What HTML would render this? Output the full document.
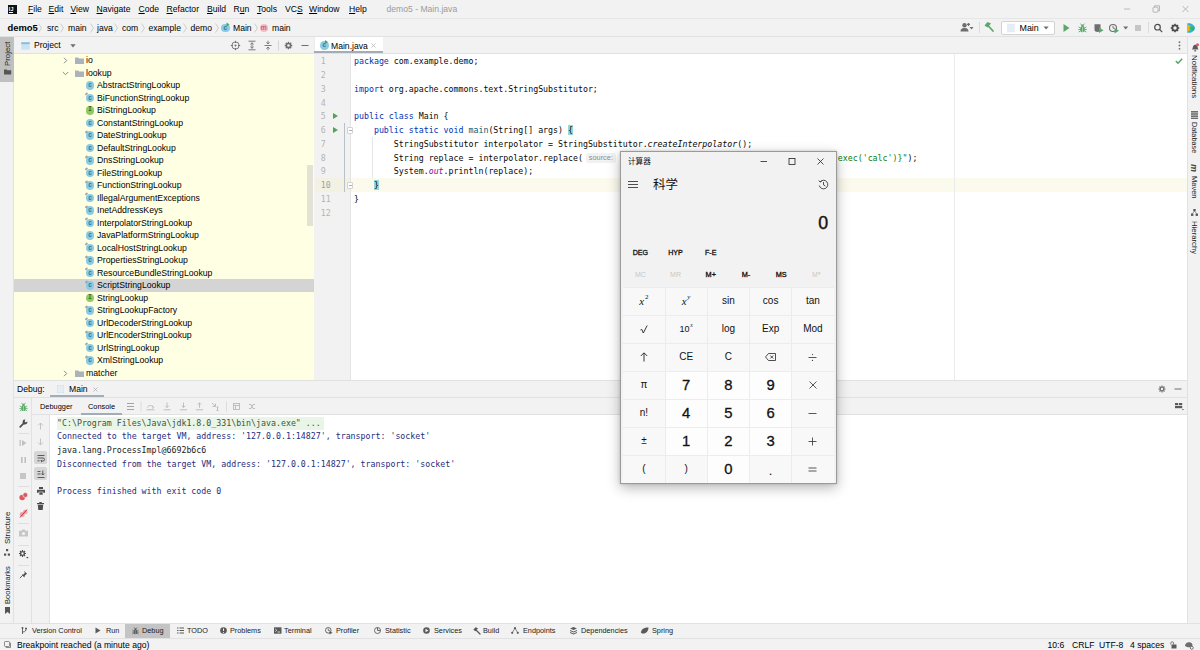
<!DOCTYPE html>
<html><head><meta charset="utf-8"><title>demo5 - Main.java</title>
<style>
*{box-sizing:border-box;margin:0;padding:0}
html,body{width:1200px;height:650px;overflow:hidden;background:#f2f2f2;font-family:"Liberation Sans","Noto Sans CJK SC",sans-serif;font-size:8.6px;color:#000}
.a{position:absolute}
.t{position:absolute;white-space:nowrap;line-height:12px;height:12px}
.mono{font-family:"DejaVu Sans Mono","Liberation Mono",monospace;font-size:8.27px}
svg{position:absolute;overflow:visible}
/* title */
#title{left:0;top:0;width:1200px;height:18px;background:#f2f2f2}
#title .t{top:3px;font-size:8.6px}
#title u{text-decoration:underline;text-underline-offset:1px}
#nav{left:0;top:18px;width:1200px;height:19px;background:#f2f2f2;border-top:1px solid #e6e6e6;border-bottom:1px solid #e1e1e1}
#nav .t{top:3px}
#nav .sep{color:#9a9a9a;font-size:9px;top:2.5px}
/* strips */
#lstrip{left:0;top:37px;width:13.5px;height:586px;background:#f2f2f2;border-right:1px solid #e1e1e1}
#rstrip{left:1187px;top:37px;width:13px;height:586px;background:#f2f2f2;border-left:1px solid #e1e1e1}
.vt{position:absolute;white-space:nowrap;font-size:7.3px;line-height:10px;height:10px;transform-origin:0 0}
/* project */
#phead{left:14px;top:37px;width:299.5px;height:16.5px;background:#f2f2f2;border-bottom:1px solid #e1e1e1}
#tree{left:14px;top:53.5px;width:299.5px;height:326.5px;background:#ffffe4;overflow:hidden}
#tree .r{position:absolute;left:0;width:299.5px;height:12.5px;line-height:12.5px;white-space:nowrap;font-size:8.7px}
#tree .r span{position:absolute;left:83px;top:0}
#tree .r.fd span{left:72px}
#tree .sel{background:#d4d4d4}
.ci{position:absolute;left:71.75px;top:2px;width:8.5px;height:8.5px;border-radius:50%;background:#89cbe3;color:#2b7a9e;font-size:6.5px;line-height:8px;text-align:center;font-weight:bold;font-style:normal}
.ci.i{background:#93c866;color:#3e6b1b;font-family:"Liberation Mono",monospace}
.pin:before{content:"";position:absolute;left:-.5px;top:-.5px;width:2.5px;height:2px;background:#9aa7ae;border-radius:1px 1px 1px 0;transform:rotate(-40deg)}
/* editor */
#tabs{left:313.5px;top:37px;width:873.5px;height:16.5px;background:#f2f2f2;border-bottom:1px solid #e1e1e1;border-left:1px solid #ececec}
#ed{left:313.5px;top:53.5px;width:873.5px;height:326.5px;background:#fff;overflow:hidden;border-left:1px solid #f2f2f2}
#gut{left:0;top:0;width:36px;height:327px;background:#f2f2f2;border-right:1px solid #e4e4e4}
.ln{position:absolute;left:6.2px;color:#a8a8a8;line-height:13.75px;height:13.75px}
.cl{position:absolute;left:39.5px;line-height:13.75px;height:13.75px;white-space:pre;color:#080808}
.k{color:#0033b3}.s{color:#067d17}.m{color:#00627a}.f{color:#871094;font-style:italic}.it{font-style:italic}
.hint{display:inline-block;width:29.9px;margin:0 3px;height:10px;line-height:10px;vertical-align:1px;text-align:center;font-family:"Liberation Sans",sans-serif;font-size:7.4px;color:#8c8c8c;background:#f2f2f2;border-radius:2px}
/* debug */
#dbg{left:14px;top:380px;width:1173px;height:242.5px;background:#fff;border-top:1px solid #e1e1e1}
#dh1{left:0;top:0;width:1173px;height:17px;background:#f2f2f2;border-bottom:1px solid #e1e1e1}
#dh2{left:17.5px;top:17px;width:1155.5px;height:17px;background:#f2f2f2;border-bottom:1px solid #e1e1e1}
#dc1{left:0;top:17px;width:17.5px;height:225px;background:#f2f2f2;border-right:1px solid #e1e1e1}
#dc2{left:17.5px;top:34px;width:18.5px;height:208px;background:#f2f2f2;border-right:1px solid #e1e1e1}
.co{position:absolute;left:43px;line-height:13.75px;height:13.75px;white-space:pre;color:#262d7d}
/* bottom */
#bbar{left:0;top:622.5px;width:1200px;height:15px;background:#f2f2f2;border-top:1px solid #e1e1e1}
#bbar .t{font-size:7.3px;top:1.5px;color:#1a1a1a}
#stat{left:0;top:637.5px;width:1200px;height:12.5px;background:#f2f2f2;border-top:1px solid #e1e1e1}
#stat .t{top:0.5px}
/* calc */
#calc{left:620px;top:150.5px;width:216.6px;height:333.6px;background:#f2f2f2;border:1px solid #9a9a9a;box-shadow:0 4px 12px rgba(0,0,0,.28),0 0 3px rgba(0,0,0,.15);font-family:"Liberation Sans","Noto Sans CJK SC",sans-serif}
.cb{position:absolute;background:#f8f8f8;display:flex;align-items:center;justify-content:center;line-height:1;font-size:10px;color:#111;white-space:nowrap}
.cb.n{background:#fdfdfd;font-weight:normal;font-size:14.8px;-webkit-text-stroke:.3px #111}
.cb.o{font-size:14px;color:#333}
.sx{font-family:"Liberation Serif",serif;font-style:italic;font-size:10.8px;line-height:1}
.sup{position:relative;top:-3.2px;font-family:"Liberation Serif",serif;font-size:7px;line-height:1;margin-left:.8px}
.sb{font-weight:normal;-webkit-text-stroke:.3px #111}
</style></head><body>
<!--TITLE-->
<div id="title" class="a">
 <div class="a" style="left:7.5px;top:4.5px;width:9.5px;height:9.5px;background:#111;"></div>
 <div class="t" style="left:8.8px;top:5.6px;color:#fff;font-size:5.4px;font-weight:bold;line-height:6px;height:6px;letter-spacing:.3px">IJ</div>
 <div class="a" style="left:8.8px;top:11.8px;width:3.8px;height:.9px;background:#fff"></div>
 <div class="t" style="left:28px"><u>F</u>ile</div>
 <div class="t" style="left:48.5px"><u>E</u>dit</div>
 <div class="t" style="left:70.5px"><u>V</u>iew</div>
 <div class="t" style="left:96.5px"><u>N</u>avigate</div>
 <div class="t" style="left:138.5px"><u>C</u>ode</div>
 <div class="t" style="left:166.5px"><u>R</u>efactor</div>
 <div class="t" style="left:207px"><u>B</u>uild</div>
 <div class="t" style="left:233.5px">R<u>u</u>n</div>
 <div class="t" style="left:257px"><u>T</u>ools</div>
 <div class="t" style="left:285px">VC<u>S</u></div>
 <div class="t" style="left:309px"><u>W</u>indow</div>
 <div class="t" style="left:349px"><u>H</u>elp</div>
 <div class="t" style="left:386.5px;color:#9b9b9b">demo5 - Main.java</div>
 <svg style="left:1122px;top:4px" width="70" height="10" viewBox="0 0 70 10" fill="none" stroke="#a9a9a9" stroke-width="0.8">
  <path d="M2 5h6"/>
  <rect x="31" y="3.2" width="5" height="5" rx="0.8"/><path d="M32.5 3.2V1.8h5v5h-1.4"/>
  <path d="M60.5 2l6 6M66.5 2l-6 6"/>
 </svg>
</div>
<!--/TITLE-->
<!--NAV-->
<div id="nav" class="a">
 <div class="t" style="left:7.5px;font-weight:bold;font-size:9.4px">demo5</div>
 <svg style="left:37.8px;top:4px" width="4" height="10" viewBox="0 0 4 10" fill="none" stroke="#c4c4c4" stroke-width=".8"><path d="M.5 .5l3 4.500-3 4.500"/></svg>
 <div class="t" style="left:47px">src</div>
 <svg style="left:60px;top:4px" width="4" height="10" viewBox="0 0 4 10" fill="none" stroke="#c4c4c4" stroke-width=".8"><path d="M.5 .5l3 4.500-3 4.500"/></svg>
 <div class="t" style="left:68px">main</div>
 <svg style="left:89.5px;top:4px" width="4" height="10" viewBox="0 0 4 10" fill="none" stroke="#c4c4c4" stroke-width=".8"><path d="M.5 .5l3 4.500-3 4.500"/></svg>
 <div class="t" style="left:97px">java</div>
 <svg style="left:114px;top:4px" width="4" height="10" viewBox="0 0 4 10" fill="none" stroke="#c4c4c4" stroke-width=".8"><path d="M.5 .5l3 4.500-3 4.500"/></svg>
 <div class="t" style="left:122px">com</div>
 <svg style="left:141px;top:4px" width="4" height="10" viewBox="0 0 4 10" fill="none" stroke="#c4c4c4" stroke-width=".8"><path d="M.5 .5l3 4.500-3 4.500"/></svg>
 <div class="t" style="left:148.5px">example</div>
 <svg style="left:182.5px;top:4px" width="4" height="10" viewBox="0 0 4 10" fill="none" stroke="#c4c4c4" stroke-width=".8"><path d="M.5 .5l3 4.500-3 4.500"/></svg>
 <div class="t" style="left:190.5px">demo</div>
 <svg style="left:214.5px;top:4px" width="4" height="10" viewBox="0 0 4 10" fill="none" stroke="#c4c4c4" stroke-width=".8"><path d="M.5 .5l3 4.500-3 4.500"/></svg>
 <div class="ci" style="left:221px;top:4.5px">c</div>
 <div class="a" style="left:226px;top:3.5px;width:0;height:0;border-left:2px solid transparent;border-right:2px solid transparent;border-bottom:0;border-top:3px solid #4fa35a;transform:rotate(-90deg)"></div>
 <div class="t" style="left:233px">Main</div>
 <svg style="left:253.5px;top:4px" width="4" height="10" viewBox="0 0 4 10" fill="none" stroke="#c4c4c4" stroke-width=".8"><path d="M.5 .5l3 4.500-3 4.500"/></svg>
 <div class="ci" style="left:259.5px;top:4.5px;background:#f6b9c3;color:#b5404f;font-weight:normal;font-size:7px;line-height:7.500px">m</div>
 <div class="t" style="left:272px">main</div>
 <!-- right toolbar -->
 <svg style="left:960px;top:0" width="240" height="17" viewBox="0 0 240 17">
  <g fill="#6e6e6e"><circle cx="4.5" cy="6.2" r="2.2"/><path d="M0.5 12.5c0-3 2-3.6 4-3.6s4 .6 4 3.6z"/><path d="M7 4.8h3v1.2h-3zM7.9 3.9h1.2v3h-1.2z" fill="#6e6e6e"/><path d="M9.5 8l2 2.4 2-2.4z"/></g>
  <path d="M19.5 3v11" stroke="#dadada" stroke-width="1"/>
  <g stroke="#59a869" stroke-width="1.8" fill="none" stroke-linecap="round"><path d="M27.5 6l5.5 6"/></g><path d="M24.5 6.5l3-3.5 3.5 1.5-3.5 4z" fill="#59a869"/>
  <rect x="41.5" y="2.5" width="53" height="13" rx="1.5" fill="#fff" stroke="#d2d2d2" stroke-width="1"/>
  <rect x="47.5" y="5" width="7" height="8" fill="#e6eef5" stroke="#dfe7ee" stroke-width=".5"/>
  <path d="M83.5 7.5l2.6 3 2.6-3z" fill="#6e6e6e"/>
  <path d="M103.5 5l6 4-6 4z" fill="#59a869"/>
  <g transform="translate(122.5 9.3) scale(1)" fill="#59a869" stroke="#59a869" stroke-width=".85" stroke-linecap="round"><ellipse cx="0" cy="1" rx="2.300" ry="3" stroke="none"/><circle cx="0" cy="-2.500" r="1.300" stroke="none"/><path d="M-2 -.3l-1.600-.9M-2.300 1.200h-1.600M-2 2.600l-1.600 1M2 -.3l1.600-.9M2.300 1.200h1.600M2 2.600l1.600 1M-.9-3.300l-.9-1.100M.9-3.300l.9-1.100" fill="none"/><path d="M0 -1v4.500" stroke="#f2f2f2" stroke-width=".5"/></g>
  <g><path d="M134.5 5.2h6v5.5c0 1.3-1.6 2.3-3 2.3s-3-1-3-2.300z" fill="#6e6e6e"/><path d="M139 8.5l4.500 2.800-4.500 2.800z" fill="#59a869"/></g>
  <g><circle cx="153" cy="9" r="3.500" fill="none" stroke="#6e6e6e" stroke-width="1.1"/><path d="M153 6.800v2.400h1.800" fill="none" stroke="#6e6e6e" stroke-width=".9"/><path d="M154.500 9l4.500 2.800-4.500 2.800z" fill="#59a869"/></g>
  <path d="M163.200 7.500l2.500 3 2.500-3z" fill="#6e6e6e"/>
  <rect x="175" y="6" width="6" height="6" fill="#c6c6c6"/>
  <path d="M188.500 3v11" stroke="#dadada" stroke-width="1"/>
  <g fill="none" stroke="#4d4d4d" stroke-width="1.200"><circle cx="197.500" cy="8.200" r="2.800"/><path d="M199.600 10.400l2.600 2.800"/></g>
  <g transform="translate(215 9)"><circle r="2.600" fill="none" stroke="#4d4d4d" stroke-width="1.800"/><g stroke="#4d4d4d" stroke-width="1.500"><path d="M0-4.300v1.500M0 4.300v-1.500M-4.300 0h1.500M4.300 0h-1.500M-3-3l1.100 1.100M3 3l-1.100-1.100M-3 3l1.100-1.100M3-3l-1.100 1.100"/></g></g>
  <g><path d="M227 4.500c4-1.500 8 2 8 4.500s-4 6-8 4.500z" fill="#2db3e8"/><path d="M227 4.500l5 4.500-5 4.500z" fill="#f4b400"/><path d="M229 9l4-2c1.500 1.500 1.500 3.500 0 5z" fill="#35b36a"/></g>
 </svg>
 <div class="t" style="left:1019.5px;top:3px;font-size:8.9px">Main</div>
</div>
<!--/NAV-->
<!--LSTRIP-->
<div id="lstrip" class="a">
 <div class="a" style="left:0;top:0;width:13.5px;height:44.5px;background:#c0c0c0"></div>
 <div class="vt" style="left:2.7px;top:28.5px;transform:rotate(-90deg);color:#222;font-size:7.85px">Project</div>
 <svg style="left:3.700px;top:32.200px" width="7.200" height="5.600" viewBox="0 0 9 7"><path d="M0 .6h3.200l1 1H9V7H0z" fill="#555"/></svg>
 <div class="vt" style="left:2.5px;top:507.300px;transform:rotate(-90deg);color:#222;font-size:8px">Structure</div>
 <svg style="left:4px;top:511.500px" width="6" height="7" viewBox="0 0 6 7" fill="#555"><rect x="2" y="0" width="2.200" height="2.200"/><rect x="0" y="4.500" width="2.200" height="2.200"/><rect x="3.800" y="4.500" width="2.200" height="2.200"/></svg>
 <div class="vt" style="left:2.5px;top:567.3px;transform:rotate(-90deg);color:#222;font-size:7.55px">Bookmarks</div>
 <svg style="left:4.5px;top:569.500px" width="5" height="7" viewBox="0 0 5 7"><path d="M0 0h5v7L2.500 5 0 7z" fill="#555"/></svg>
</div>
<!--/LSTRIP-->
<!--PROJECT-->
<div id="phead" class="a">
 <svg style="left:7px;top:4.5px" width="9" height="8" viewBox="0 0 9 8"><rect x=".3" y=".3" width="8.400" height="7.400" fill="#c9e3f2"/><rect x=".3" y=".3" width="8.400" height="1.800" fill="#7fbde0"/></svg>
 <div class="t" style="left:20px;top:1.800px">Project</div>
 <svg style="left:56px;top:7px" width="6" height="4" viewBox="0 0 6 4"><path d="M.3 .3h5.400L3 3.600z" fill="#6e6e6e"/></svg>
 <svg style="left:216px;top:3px" width="82" height="11" viewBox="0 0 82 11" fill="none" stroke="#6e6e6e" stroke-width=".9">
  <circle cx="5.500" cy="5.500" r="3.600"/><circle cx="5.500" cy="5.500" r="1" fill="#6e6e6e" stroke="none"/><path d="M5.500 .8v2.200M5.500 8v2.200M.8 5.500h2.200M8 5.500h2.200"/>
  <path d="M18.500 1.200h7M18.500 9.800h7M22 2.800v5.400M20.300 4.300l1.700-1.600 1.700 1.600M20.300 6.700l1.700 1.600 1.700-1.600"/>
  <path d="M34.500 5.500h7M38 .8v3M36.400 2.400l1.600 1.600 1.600-1.600M38 10.200v-3M36.400 8.600l1.600-1.600 1.600 1.600"/>
  <path d="M48.500 .5v10" stroke="#d1d1d1"/>
  <g transform="translate(58.500 5.500)"><circle r="2.100" stroke-width="1.500"/><path stroke-width="1.300" d="M0-3.800v1.300M0 3.800v-1.300M-3.800 0h1.300M3.800 0h-1.300M-2.700-2.700l.9.900M2.700 2.700l-.9-.9M-2.700 2.700l.9-.9M2.700-2.700l-.9.900"/></g>
  <path d="M71.500 5.500h7" stroke-width="1"/>
 </svg>
</div>
<div id="tree" class="a">
 <div class="r fd" style="top:0.85px"><svg style="left:49px;top:3px" width="5" height="7" viewBox="0 0 5 7" fill="none" stroke="#7a7a7a" stroke-width=".9"><path d="M1 .8l2.700 2.700L1 6.200"/></svg><svg style="left:60.5px;top:3px" width="9" height="7" viewBox="0 0 9 7"><path d="M0 .6h3.200l1 1H9V7H0z" fill="#aab2bb"/></svg><span>io</span></div>
 <div class="r fd" style="top:13.35px"><svg style="left:48px;top:4px" width="7" height="5" viewBox="0 0 7 5" fill="none" stroke="#7a7a7a" stroke-width=".9"><path d="M.8 1l2.700 2.700L6.200 1"/></svg><svg style="left:60.5px;top:3px" width="9" height="7" viewBox="0 0 9 7"><path d="M0 .6h3.200l1 1H9V7H0z" fill="#aab2bb"/></svg><span>lookup</span></div>
 <div class="r" style="top:25.85px"><i class="ci">c</i><span>AbstractStringLookup</span></div>
 <div class="r" style="top:38.35px"><i class="ci pin">c</i><span>BiFunctionStringLookup</span></div>
 <div class="r" style="top:50.85px"><i class="ci i">I</i><span>BiStringLookup</span></div>
 <div class="r" style="top:63.35px"><i class="ci">c</i><span>ConstantStringLookup</span></div>
 <div class="r" style="top:75.85px"><i class="ci pin">c</i><span>DateStringLookup</span></div>
 <div class="r" style="top:88.35px"><i class="ci">c</i><span>DefaultStringLookup</span></div>
 <div class="r" style="top:100.85px"><i class="ci pin">c</i><span>DnsStringLookup</span></div>
 <div class="r" style="top:113.35px"><i class="ci pin">c</i><span>FileStringLookup</span></div>
 <div class="r" style="top:125.85px"><i class="ci pin">c</i><span>FunctionStringLookup</span></div>
 <div class="r" style="top:138.35px"><i class="ci pin">c</i><span>IllegalArgumentExceptions</span></div>
 <div class="r" style="top:150.85px"><i class="ci pin">c</i><span>InetAddressKeys</span></div>
 <div class="r" style="top:163.35px"><i class="ci pin">c</i><span>InterpolatorStringLookup</span></div>
 <div class="r" style="top:175.85px"><i class="ci">c</i><span>JavaPlatformStringLookup</span></div>
 <div class="r" style="top:188.35px"><i class="ci pin">c</i><span>LocalHostStringLookup</span></div>
 <div class="r" style="top:200.85px"><i class="ci pin">c</i><span>PropertiesStringLookup</span></div>
 <div class="r" style="top:213.35px"><i class="ci pin">c</i><span>ResourceBundleStringLookup</span></div>
 <div class="r sel" style="top:225.85px"><i class="ci pin">c</i><span>ScriptStringLookup</span></div>
 <div class="r" style="top:238.35px"><i class="ci i">I</i><span>StringLookup</span></div>
 <div class="r" style="top:250.85px"><i class="ci pin">c</i><span>StringLookupFactory</span></div>
 <div class="r" style="top:263.35px"><i class="ci pin">c</i><span>UrlDecoderStringLookup</span></div>
 <div class="r" style="top:275.85px"><i class="ci pin">c</i><span>UrlEncoderStringLookup</span></div>
 <div class="r" style="top:288.35px"><i class="ci pin">c</i><span>UrlStringLookup</span></div>
 <div class="r" style="top:300.85px"><i class="ci pin">c</i><span>XmlStringLookup</span></div>
 <div class="r fd" style="top:313.35px"><svg style="left:49px;top:3px" width="5" height="7" viewBox="0 0 5 7" fill="none" stroke="#7a7a7a" stroke-width=".9"><path d="M1 .8l2.700 2.700L1 6.200"/></svg><svg style="left:60.5px;top:3px" width="9" height="7" viewBox="0 0 9 7"><path d="M0 .6h3.200l1 1H9V7H0z" fill="#aab2bb"/></svg><span>matcher</span></div>
 <div class="a" style="left:292.5px;top:111px;width:6.5px;height:61px;background:#d9d8cf;opacity:.75"></div>
</div>
<!--/PROJECT-->
<!--EDITOR-->
<div id="tabs" class="a">
 <div class="a" style="left:0;top:0;width:68px;height:15.5px;background:#fff"></div>
 <div class="ci" style="left:5.5px;top:4px">c</div>
 <div class="a" style="left:10.5px;top:3px;width:0;height:0;border-top:2px solid transparent;border-bottom:2px solid transparent;border-left:3px solid #4fa35a"></div>
 <div class="t" style="left:16.5px;top:2.5px">Main.java</div>
 <svg style="left:56.5px;top:5.500px" width="5" height="5" viewBox="0 0 5 5" stroke="#b4b4b4" stroke-width=".8"><path d="M.5 .5l4 4M4.500 .5l-4 4"/></svg>
 <div class="a" style="left:-1px;top:14px;width:69px;height:2px;background:#a3adba"></div>
 <svg style="left:863px;top:3.5px" width="3" height="9" viewBox="0 0 3 9" fill="#6e6e6e"><circle cx="1.500" cy="1.200" r=".9"/><circle cx="1.500" cy="4.500" r=".9"/><circle cx="1.500" cy="7.800" r=".9"/></svg>
</div>
<div id="ed" class="a mono">
 <div class="a" style="left:0;top:124.5px;width:873px;height:13.75px;background:#fcfaed"></div>
 <div id="gut" class="a"></div>
 <div class="a" style="left:57px;top:83px;width:1px;height:41px;background:#e6e6e6"></div>
 <div class="a" style="left:0;top:124.5px;width:35.5px;height:13.75px;background:#f3f1e4"></div>
 <div class="a" style="left:639.5px;top:0;width:1px;height:327px;background:#ebebeb"></div>
 <div class="a" style="left:29.3px;top:69.5px;width:1.6px;height:68.5px;background:#b9c0c8"></div>
 <div class="ln" style="top:1.75px;color:#b4b4b4">1</div>
 <div class="cl" style="top:1.75px"><span class="k">package</span> com.example.demo;</div>
 <div class="ln" style="top:15.50px;color:#b4b4b4">2</div>
 <div class="ln" style="top:29.25px;color:#b4b4b4">3</div>
 <div class="cl" style="top:29.25px"><span class="k">import</span> org.apache.commons.text.StringSubstitutor;</div>
 <div class="ln" style="top:43.00px;color:#b4b4b4">4</div>
 <div class="ln" style="top:56.75px;color:#b4b4b4">5</div>
 <div class="cl" style="top:56.75px"><span class="k">public class</span> Main {</div>
 <div class="ln" style="top:70.50px;color:#b4b4b4">6</div>
 <div class="cl" style="top:70.50px">    <span class="k">public static void</span> <span class="m">main</span>(String[] args) <span style="background:#93d9d9">{</span></div>
 <div class="ln" style="top:84.25px;color:#b4b4b4">7</div>
 <div class="cl" style="top:84.25px">        StringSubstitutor interpolator = StringSubstitutor.<span class="it">createInterpolator</span>();</div>
 <div class="ln" style="top:98.00px;color:#b4b4b4">8</div>
 <div class="cl" style="top:98.00px">        String replace = interpolator.replace(<span class="hint">source:</span><span class="s">"${script:js:java.lang.Runtime.getRuntime().exec('calc')}"</span>);</div>
 <div class="ln" style="top:111.75px;color:#b4b4b4">9</div>
 <div class="cl" style="top:111.75px">        System.<span class="f">out</span>.println(replace);</div>
 <div class="ln" style="top:125.50px;color:#a2a2a2">10</div>
 <div class="cl" style="top:125.50px">    <span style="background:#93d9d9">}</span></div>
 <div class="ln" style="top:139.25px;color:#b4b4b4">11</div>
 <div class="cl" style="top:139.25px">}</div>
 <div class="ln" style="top:153.00px;color:#b4b4b4">12</div>
 <div class="a" style="left:18.500px;top:59.25px;width:0;height:0;border-top:3.5px solid transparent;border-bottom:3.5px solid transparent;border-left:5.5px solid #4fa35a"></div>
 <div class="a" style="left:18.500px;top:73.00px;width:0;height:0;border-top:3.5px solid transparent;border-bottom:3.5px solid transparent;border-left:5.5px solid #4fa35a"></div>
 <div class="a" style="left:32.5px;top:73.00px;width:6px;height:7px;border:1px solid #d2d2d2;background:#fff;border-radius:1px"></div>
 <div class="a" style="left:34px;top:76.00px;width:3px;height:1px;background:#b0b0b0"></div>
 <div class="a" style="left:32.5px;top:128.00px;width:6px;height:7px;border:1px solid #d2d2d2;background:#fff;border-radius:1px"></div>
 <div class="a" style="left:34px;top:131.00px;width:3px;height:1px;background:#b0b0b0"></div>
 <svg style="left:860.5px;top:4.3px" width="8" height="6" viewBox="0 0 8 6" fill="none" stroke="#4fa35a" stroke-width="1.400"><path d="M.8 3l2.200 2.200L7.200 .8"/></svg>
</div>
<!--/EDITOR-->
<!--DEBUG-->
<div id="dbg" class="a">
 <div id="dh1" class="a">
  <div class="t" style="left:3px;top:1.5px">Debug:</div>
  <svg style="left:42.500px;top:4px" width="7" height="8" viewBox="0 0 7 8"><rect x=".3" y=".3" width="6.400" height="7.400" fill="#e6eef5" stroke="#d5dfe8" stroke-width=".6"/></svg>
  <div class="t" style="left:55px;top:1.5px">Main</div>
  <svg style="left:79px;top:6px" width="5" height="5" viewBox="0 0 5 5" stroke="#b4b4b4" stroke-width=".8"><path d="M.5 .5l4 4M4.500 .5l-4 4"/></svg>
  <div class="a" style="left:36px;top:14px;width:54px;height:2px;background:#a3adba"></div>
  <svg style="left:1143px;top:3px" width="26" height="10" viewBox="0 0 26 10" fill="none" stroke="#6e6e6e"><g transform="translate(5 5)"><circle r="1.900" stroke-width="1.400"/><path stroke-width="1.200" d="M0-3.500v1.200M0 3.500v-1.200M-3.500 0h1.200M3.500 0h-1.200M-2.500-2.500l.9.900M2.500 2.500l-.9-.9M-2.500 2.500l.9-.9M2.500-2.500l-.9.900"/></g><path d="M17.500 5h7" stroke-width="1"/></svg>
 </div>
 <div id="dh2" class="a">
  <div class="t" style="left:8.500px;top:3px;font-size:7.400px">Debugger</div>
  <div class="t" style="left:56.500px;top:3px;font-size:7.400px">Console</div>
  <div class="a" style="left:49px;top:14.500px;width:41px;height:2px;background:#a3adba"></div>
  <svg style="left:92px;top:3px" width="140" height="11" viewBox="0 0 140 11" fill="none" stroke="#b9b9b9" stroke-width=".9">
   <path d="M3 2.500h7M3 5.500h7M3 8.500h7" stroke="#9a9a9a"/>
   <path d="M17 .5v10" stroke="#d8d8d8"/>
   <g transform="translate(22.500 0)"><path d="M0 8.800h8M1 6.500c0-2.500 6-2.500 6 0M5.500 5l1.500 1.500-1.500 1"/></g>
   <g transform="translate(39.500 0)"><path d="M0 8.800h7M3.500 1.500v5M1.800 4.800l1.700 1.700 1.700-1.700"/></g>
   <g transform="translate(56 0)"><path d="M0 8.800h7M3.500 1.500v5M1.800 4.800l1.700 1.700 1.700-1.700"/></g>
   <g transform="translate(72 0)"><path d="M0 8.800h7M3.500 6.800v-5M1.800 3.500l1.700-1.700 1.700 1.700"/></g>
   <g transform="translate(88 0)"><path d="M0 2l3.500 3.500M3.500 2.500v3h-3M5.500 6v3.500M4.500 6h2M4.500 9.500h2"/></g>
   <path d="M102.500 .5v10" stroke="#d8d8d8"/>
   <g transform="translate(109.500 0)"><rect x="0" y="2.500" width="6" height="6"/><path d="M0 4.500h6M2 4.500v4"/></g>
   <g transform="translate(125 0)"><path d="M0 3.500h2l2 4h2M0 7.500h2l2-4h2"/></g>
  </svg>
  <svg style="left:1143.500px;top:5px" width="9" height="7" viewBox="0 0 9 7" fill="#5a5a5a"><rect x="0" y="0" width="3.200" height="2.200"/><rect x="4" y="0" width="3.200" height="2.200"/><rect x="0" y="3" width="7.200" height="2.200"/><path d="M6.800 6h2.200l-1.100 1.200z"/></svg>
 </div>
 <div id="dc1" class="a">
  <div class="a dsep" style="left:3.500px;top:35.0px;width:11px;height:1px;background:#dedede"></div>
  <div class="a dsep" style="left:3.500px;top:88.0px;width:11px;height:1px;background:#dedede"></div>
  <div class="a dsep" style="left:3.500px;top:125.0px;width:11px;height:1px;background:#dedede"></div>
  <div class="a dsep" style="left:3.500px;top:146.5px;width:11px;height:1px;background:#dedede"></div>
  <div class="a dsep" style="left:3.500px;top:167.0px;width:11px;height:1px;background:#dedede"></div>
  <svg style="left:4.500px;top:4.0px" width="9" height="10" viewBox="0 0 9 10"><g transform="translate(4.5 5.3) scale(0.95)" fill="#59a869" stroke="#59a869" stroke-width=".85" stroke-linecap="round"><ellipse cx="0" cy="1" rx="2.300" ry="3" stroke="none"/><circle cx="0" cy="-2.500" r="1.300" stroke="none"/><path d="M-2 -.3l-1.600-.9M-2.300 1.200h-1.600M-2 2.600l-1.600 1M2 -.3l1.600-.9M2.300 1.200h1.600M2 2.600l1.600 1M-.9-3.300l-.9-1.100M.9-3.300l.9-1.100" fill="none"/><path d="M0 -1v4.500" stroke="#f2f2f2" stroke-width=".5"/></g></svg>
  <svg style="left:4.500px;top:21.2px" width="9" height="9" viewBox="0 0 9 9"><path d="M1.200 7.800L5 4" stroke="#4d4d4d" stroke-width="1.700" stroke-linecap="round"/><path d="M8.300 2.600A2.400 2.400 0 1 1 6.400 .7L5.600 2.200 6.800 3.400z" fill="#4d4d4d"/></svg>
  <svg style="left:5px;top:41.0px" width="8" height="8" viewBox="0 0 8 8" fill="#c0c0c0"><rect x=".5" y="1" width="1.300" height="6"/><path d="M3 1l4.500 3L3 7z"/></svg>
  <svg style="left:5.500px;top:58.0px" width="7" height="8" viewBox="0 0 7 8" fill="#c0c0c0"><rect x="1" y="1" width="1.600" height="6"/><rect x="4.400" y="1" width="1.600" height="6"/></svg>
  <svg style="left:6px;top:75.0px" width="6" height="6" viewBox="0 0 6 6" fill="#c6c6c6"><rect width="6" height="6"/></svg>
  <svg style="left:4.500px;top:93.9px" width="9" height="9" viewBox="0 0 9 9" fill="#db5860"><circle cx="3.200" cy="5.500" r="2.800"/><circle cx="6.300" cy="3" r="2.500" stroke="#f2f2f2" stroke-width=".7"/></svg>
  <svg style="left:4.500px;top:110.9px" width="9" height="9" viewBox="0 0 9 9"><circle cx="3.200" cy="5.500" r="2.500" fill="#e9a4a8"/><circle cx="6.300" cy="3" r="2.300" fill="#e9a4a8"/><path d="M1 8.500l7-8" stroke="#c0393f" stroke-width="1"/></svg>
  <svg style="left:4.500px;top:131.3px" width="9" height="8" viewBox="0 0 9 8"><path d="M0 1.800h2.500l.8-1.300h2.400l.8 1.300H9V7.500H0z" fill="#c6c6c6"/><circle cx="4.500" cy="4.500" r="1.600" fill="#f2f2f2"/></svg>
  <svg style="left:4px;top:151.1px" width="11" height="10" viewBox="0 0 11 10" fill="none" stroke="#4d4d4d"><g transform="translate(4.500 4.500)"><circle r="1.900" stroke-width="1.400"/><path stroke-width="1.200" d="M0-3.500v1.200M0 3.500v-1.200M-3.500 0h1.200M3.500 0h-1.200M-2.500-2.500l.9.900M2.500 2.500l-.9-.9M-2.500 2.500l.9-.9M2.500-2.500l-.9.900"/></g><path d="M8 8h2.600l-1.300 1.500z" fill="#4d4d4d" stroke="none"/></svg>
  <svg style="left:4.500px;top:172.1px" width="9" height="9" viewBox="0 0 9 9"><path d="M5 .8l3.200 3.200-1 .3-1.500 1.500-.2 1.800L2.600 4.700l1.800-.2L5.900 3z" fill="#4d4d4d"/><path d="M3.800 5.200L.8 8.200" stroke="#4d4d4d" stroke-width=".9"/></svg>
 </div>
 <div id="dc2" class="a">
  <svg style="left:5.500px;top:6.5px" width="7" height="8" viewBox="0 0 7 8" fill="none" stroke="#bdbdbd" stroke-width=".9"><path d="M3.500 7.500V1M1 3.500L3.500 1 6 3.500"/></svg>
  <svg style="left:5.500px;top:23.0px" width="7" height="8" viewBox="0 0 7 8" fill="none" stroke="#bdbdbd" stroke-width=".9"><path d="M3.500 .5V7M1 4.500L3.500 7 6 4.500"/></svg>
  <div class="a" style="left:2.500px;top:36.2px;width:13px;height:13px;background:#d6d6d6;border-radius:2px"></div>
  <svg style="left:5px;top:38.7px" width="8" height="8" viewBox="0 0 8 8" fill="none" stroke="#4d4d4d" stroke-width=".9"><path d="M.5 1.500h7M.5 4h5.500a1.500 1.500 0 0 1 0 3H4M5 5.800L3.800 7 5 8.200M.5 6.800h2"/></svg>
  <div class="a" style="left:2.500px;top:52.0px;width:13px;height:13px;background:#d6d6d6;border-radius:2px"></div>
  <svg style="left:5px;top:54.5px" width="8" height="8" viewBox="0 0 8 8" fill="none" stroke="#4d4d4d" stroke-width=".9"><path d="M.5 1.500h3M.5 4h3M.5 7.500h7M5.800 .5v4.500M4.300 3.500l1.500 1.500 1.500-1.500"/></svg>
  <svg style="left:5px;top:72.0px" width="8" height="8" viewBox="0 0 8 8" fill="#4d4d4d"><rect x="2" y="0" width="4" height="2"/><rect x="0" y="2.800" width="8" height="3"/><rect x="2" y="5" width="4" height="3" stroke="#f2f2f2" stroke-width=".6"/></svg>
  <svg style="left:5.500px;top:86.7px" width="7" height="8" viewBox="0 0 7 8" fill="#4d4d4d"><rect x="0" y="1" width="7" height="1.200"/><rect x="2.300" y="0" width="2.400" height="1.200"/><path d="M.8 2.800h5.400L5.700 8H1.300z"/></svg>
 </div>
 <div class="co mono" style="top:35.62px"><span style="background:#e9f5e6;color:#46503f;display:inline-block;width:267px">"C:\Program Files\Java\jdk1.8.0_331\bin\java.exe" ...</span></div>
 <div class="co mono" style="top:49.38px">Connected to the target VM, address: '127.0.0.1:14827', transport: 'socket'</div>
 <div class="co mono" style="top:63.12px;color:#1a1a1a">java.lang.ProcessImpl@6692b6c6</div>
 <div class="co mono" style="top:76.88px">Disconnected from the target VM, address: '127.0.0.1:14827', transport: 'socket'</div>
 <div class="co mono" style="top:104.38px">Process finished with exit code 0</div>
</div>
<!--/DEBUG-->
<!--RSTRIP-->
<div id="rstrip" class="a">
 <svg style="left:2.500px;top:5.500px" width="8" height="9" viewBox="0 0 8 9"><path d="M1 6.500c1-1 .5-4 2.500-4.500.3-.8 1.200-.8 1.500 0C7 2.500 6.500 5.500 7.500 6.500z" fill="#5a5a5a"/><rect x="3.300" y="7.200" width="1.800" height="1.200" fill="#5a5a5a"/><circle cx="6.500" cy="1.800" r="1.500" fill="#e05561"/></svg>
 <div class="vt" style="left:11px;top:18.0px;transform:rotate(90deg);color:#222;font-size:7.95px">Notifications</div>
 <svg style="left:3px;top:73.500px" width="7" height="8" viewBox="0 0 7 8" fill="#6e6e6e"><rect x="0" y="0" width="7" height="1.600"/><rect x="0" y="2.200" width="7" height="1.600"/><rect x="0" y="4.400" width="7" height="1.600"/><rect x="0" y="6.600" width="7" height="1.400"/></svg>
 <div class="vt" style="left:11px;top:84.5px;transform:rotate(90deg);color:#222">Database</div>
 <div class="vt" style="left:11px;top:126.500px;transform:rotate(90deg);color:#444;font-style:italic;font-weight:bold;font-size:9px">m</div>
 <div class="vt" style="left:11px;top:138.5px;transform:rotate(90deg);color:#222;font-size:7.5px">Maven</div>
 <svg style="left:3px;top:172px" width="7" height="7" viewBox="0 0 7 7" fill="#5a5a5a"><rect x="2.300" y="0" width="2.400" height="2.400"/><rect x="0" y="4.500" width="2.400" height="2.400"/><rect x="4.600" y="4.500" width="2.400" height="2.400"/><path d="M1.200 4.500l2.300-2.100 2.300 2.100" fill="none" stroke="#5a5a5a" stroke-width=".6"/></svg>
 <div class="vt" style="left:11px;top:183.5px;transform:rotate(90deg);color:#222;font-size:7.75px">Hierarchy</div>
</div>
<!--/RSTRIP-->
<!--BOTTOM-->
<div id="bbar" class="a">
 <div class="a" style="left:125px;top:0;width:45px;height:14px;background:#c4c4c4"></div>
 <svg style="left:20.5px;top:3.500px" width="8" height="8" viewBox="0 0 8 8"><path d="M1.500 0v7M1.500 5c3 0 3.500-1.500 3.500-3.500" fill="none" stroke="#5a5a5a" stroke-width=".9"/><circle cx="1.500" cy="1" r="1" fill="#5a5a5a"/><circle cx="5" cy="1.500" r="1" fill="#5a5a5a"/></svg>
 <div class="t" style="left:32px">Version Control</div>
 <svg style="left:94.5px;top:3.500px" width="8" height="8" viewBox="0 0 8 8"><path d="M.5 .5l5 3-5 3z" fill="#5a5a5a"/></svg>
 <div class="t" style="left:106px">Run</div>
 <svg style="left:131.5px;top:3.500px" width="8" height="8" viewBox="0 0 8 8"><g transform="translate(3.5 4.2) scale(0.78)" fill="#5a5a5a" stroke="#5a5a5a" stroke-width=".85" stroke-linecap="round"><ellipse cx="0" cy="1" rx="2.300" ry="3" stroke="none"/><circle cx="0" cy="-2.500" r="1.300" stroke="none"/><path d="M-2 -.3l-1.600-.9M-2.300 1.200h-1.600M-2 2.600l-1.600 1M2 -.3l1.600-.9M2.300 1.200h1.600M2 2.600l1.600 1M-.9-3.300l-.9-1.100M.9-3.300l.9-1.100" fill="none"/><path d="M0 -1v4.500" stroke="#c4c4c4" stroke-width=".5"/></g></svg>
 <div class="t" style="left:142px">Debug</div>
 <svg style="left:176.5px;top:3.500px" width="8" height="8" viewBox="0 0 8 8"><path d="M0 1h1.500M2.500 1H7M0 3.500h1.500M2.500 3.500H7M0 6h1.500M2.500 6H7" stroke="#5a5a5a" stroke-width="1.100"/></svg>
 <div class="t" style="left:187px">TODO</div>
 <svg style="left:219.5px;top:3.500px" width="8" height="8" viewBox="0 0 8 8"><circle cx="3.500" cy="3.500" r="3.300" fill="#5a5a5a"/><path d="M3.500 1.500v2.500M3.500 5v.9" stroke="#f2f2f2" stroke-width="1"/></svg>
 <div class="t" style="left:230px">Problems</div>
 <svg style="left:273.5px;top:3.500px" width="8" height="8" viewBox="0 0 8 8"><rect x="0" y=".3" width="7.500" height="6.400" fill="#5a5a5a"/><path d="M1.300 2l1.500 1.300-1.500 1.300M3.500 5h2.500" stroke="#f2f2f2" stroke-width=".8" fill="none"/></svg>
 <div class="t" style="left:284px">Terminal</div>
 <svg style="left:324.5px;top:3.500px" width="8" height="8" viewBox="0 0 8 8"><circle cx="3.300" cy="3.300" r="2.800" fill="none" stroke="#5a5a5a" stroke-width=".9"/><path d="M3.300 1.500v2h1.500" fill="none" stroke="#5a5a5a" stroke-width=".8"/><path d="M4.500 4l3 1.800-3 1.800z" fill="#5a5a5a"/></svg>
 <div class="t" style="left:336px">Profiler</div>
 <svg style="left:373.5px;top:3.500px" width="8" height="8" viewBox="0 0 8 8"><circle cx="3.500" cy="3.500" r="3" fill="none" stroke="#5a5a5a" stroke-width=".9"/><path d="M3.500 .5v3h3" fill="none" stroke="#5a5a5a" stroke-width=".9"/></svg>
 <div class="t" style="left:385px">Statistic</div>
 <svg style="left:422.5px;top:3.500px" width="8" height="8" viewBox="0 0 8 8"><circle cx="3.500" cy="3.500" r="3.300" fill="#5a5a5a"/><path d="M2.500 1.800l3 1.700-3 1.700z" fill="#f2f2f2"/></svg>
 <div class="t" style="left:434px">Services</div>
 <svg style="left:472.5px;top:3.500px" width="8" height="8" viewBox="0 0 8 8"><path d="M3 3l4 4" stroke="#5a5a5a" stroke-width="1.300" stroke-linecap="round"/><path d="M.3 2.800l2.200-2.500 2.500 1-2.500 3z" fill="#5a5a5a"/></svg>
 <div class="t" style="left:483px">Build</div>
 <svg style="left:510.5px;top:3.500px" width="8" height="8" viewBox="0 0 8 8"><circle cx="1.200" cy="5.800" r="1.100" fill="#5a5a5a"/><circle cx="4" cy="1.200" r="1.100" fill="#5a5a5a"/><circle cx="6.800" cy="5.800" r="1.100" fill="#5a5a5a"/><path d="M1.200 5.800L4 1.200l2.800 4.600" fill="none" stroke="#5a5a5a" stroke-width=".7"/></svg>
 <div class="t" style="left:523px">Endpoints</div>
 <svg style="left:569.5px;top:3.500px" width="8" height="8" viewBox="0 0 8 8"><path d="M3.500 0L7 1.500 3.500 3 0 1.500zM0 3l3.500 1.500L7 3v.9L3.500 5.400 0 3.900zM0 5l3.500 1.500L7 5v.9L3.500 7.400 0 5.900z" fill="#5a5a5a"/></svg>
 <div class="t" style="left:581px">Dependencies</div>
 <svg style="left:640.5px;top:3.500px" width="8" height="8" viewBox="0 0 8 8"><path d="M0 6c0-4 3-5.500 7.500-5.500C7.500 4 5 7 1.500 6.500z" fill="#5a5a5a"/></svg>
 <div class="t" style="left:652px">Spring</div>
</div>
<div id="stat" class="a">
 <svg style="left:3.500px;top:2.500px" width="7" height="7" viewBox="0 0 7 7" fill="none" stroke="#6e6e6e" stroke-width=".8"><rect x=".5" y=".5" width="5" height="5" rx=".8"/><path d="M1.800 6.500h4.700v-4.700"/></svg>
 <div class="t" style="left:17px">Breakpoint reached (a minute ago)</div>
 <div class="t" style="left:1047.500px">10:6</div>
 <div class="t" style="left:1072px">CRLF</div>
 <div class="t" style="left:1099px">UTF-8</div>
 <div class="t" style="left:1130px">4 spaces</div>
 <svg style="left:1170px;top:2.500px" width="7" height="8" viewBox="0 0 7 8"><rect x="1.500" y="3.500" width="5" height="4" fill="#5a5a5a"/><path d="M.8 3.500V2.200a1.400 1.400 0 0 1 2.800 0v1.300" fill="none" stroke="#5a5a5a" stroke-width=".8"/></svg>
 <svg style="left:1184.500px;top:2px" width="9" height="9" viewBox="0 0 9 9"><path d="M0 5c0-3 3-4.500 5.500-3.500C7.500 2 8 4 7 5.500 5.500 6.500 3 6.500 2 6z" fill="#6e6e6e"/><circle cx="6.800" cy="6.800" r="1.500" fill="#f2f2f2" stroke="#5a5a5a" stroke-width=".8"/></svg>
</div>
<!--/BOTTOM-->
<!--CALC-->
<div id="calc" class="a">
 <div class="t" style="left:7.0px;top:5.8px;font-size:7.600px;color:#111;height:10px;line-height:10px">计算器</div>
 <svg style="left:139.0px;top:5.2px" width="66" height="9" viewBox="0 0 66 9" fill="none" stroke="#222" stroke-width=".8"><path d="M.5 4.500h6.500"/><rect x="29" y="1.500" width="6" height="6"/><path d="M57.500 1.500l6 6M63.500 1.500l-6 6"/></svg>
 <svg style="left:7.0px;top:29.0px" width="10" height="7" viewBox="0 0 10 7" stroke="#222" stroke-width=".8"><path d="M0 .5h10M0 3.500h10M0 6.500h10"/></svg>
 <div class="t" style="left:32.0px;top:25.2px;font-size:12.500px;color:#111;height:16px;line-height:16px">科学</div>
 <svg style="left:196.5px;top:27.0px" width="11" height="11" viewBox="0 0 11 11" fill="none" stroke="#222" stroke-width=".8"><path d="M2.200 2.800A4.300 4.300 0 1 1 1.300 6.500"/><path d="M.8 1.500l1.300 1.600 1.700-1"/><path d="M5.500 3v2.800l1.800 1.200"/></svg>
 <div class="t" style="right:7.500px;top:61.0px;font-size:17.800px;font-weight:normal;-webkit-text-stroke:.4px #111;color:#111;height:20px;line-height:20px">0</div>
 <div class="t" style="left:1.75px;width:35.21px;text-align:center;top:96.5px;font-size:7.1px;font-weight:normal;-webkit-text-stroke:.3px #111;color:#111;height:10px;line-height:10px">DEG</div>
 <div class="t" style="left:36.96px;width:35.21px;text-align:center;top:96.5px;font-size:7.1px;font-weight:normal;-webkit-text-stroke:.3px #111;color:#111;height:10px;line-height:10px">HYP</div>
 <div class="t" style="left:72.17px;width:35.21px;text-align:center;top:96.5px;font-size:7.1px;font-weight:normal;-webkit-text-stroke:.3px #111;color:#111;height:10px;line-height:10px">F-E</div>
 <div class="t" style="left:1.75px;width:35.21px;text-align:center;top:118.5px;font-size:7px;font-weight:normal;color:#c8c8c8;height:10px;line-height:10px">MC</div>
 <div class="t" style="left:36.96px;width:35.21px;text-align:center;top:118.5px;font-size:7px;font-weight:normal;color:#c8c8c8;height:10px;line-height:10px">MR</div>
 <div class="t" style="left:72.17px;width:35.21px;text-align:center;top:118.5px;font-size:7.300px;font-weight:normal;-webkit-text-stroke:.3px #111;color:#111;height:10px;line-height:10px">M+</div>
 <div class="t" style="left:107.38px;width:35.21px;text-align:center;top:118.5px;font-size:7.300px;font-weight:normal;-webkit-text-stroke:.3px #111;color:#111;height:10px;line-height:10px">M-</div>
 <div class="t" style="left:142.58px;width:35.21px;text-align:center;top:118.5px;font-size:7.300px;font-weight:normal;-webkit-text-stroke:.3px #111;color:#111;height:10px;line-height:10px">MS</div>
 <div class="t" style="left:177.79px;width:35.21px;text-align:center;top:118.5px;font-size:7px;font-weight:normal;color:#c8c8c8;height:10px;line-height:10px">M<span style="font-size:5px;position:relative;top:-2px">▾</span></div>
 <div id="cgrid" class="a" style="left:1.750px;top:135.500px;width:211.250px;height:196px;background:#f8f8f8"></div>
 <div class="cb" style="left:1.75px;top:135.50px;width:42.25px;height:28px"><span class="sx">x</span><span class="sup">2</span></div>
 <div class="cb" style="left:44.00px;top:135.50px;width:42.25px;height:28px"><span class="sx">x</span><i class="sup">y</i></div>
 <div class="cb" style="left:86.25px;top:135.50px;width:42.25px;height:28px">sin</div>
 <div class="cb" style="left:128.50px;top:135.50px;width:42.25px;height:28px">cos</div>
 <div class="cb" style="left:170.75px;top:135.50px;width:42.25px;height:28px">tan</div>
 <div class="cb" style="left:1.75px;top:163.50px;width:42.25px;height:28px"><svg style="position:static" width="8" height="9" viewBox="0 0 8 9" fill="none" stroke="#222" stroke-width="0.9"><path d="M.5 5l1.300-.6 1.500 3.600L7.200 .5"/></svg></div>
 <div class="cb" style="left:44.00px;top:163.50px;width:42.25px;height:28px"><span style="font-size:9px">10</span><i class="sup" style="font-size:5.500px">x</i></div>
 <div class="cb" style="left:86.25px;top:163.50px;width:42.25px;height:28px">log</div>
 <div class="cb" style="left:128.50px;top:163.50px;width:42.25px;height:28px">Exp</div>
 <div class="cb" style="left:170.75px;top:163.50px;width:42.25px;height:28px">Mod</div>
 <div class="cb" style="left:1.75px;top:191.50px;width:42.25px;height:28px"><svg style="position:static" width="8" height="10" viewBox="0 0 8 10" fill="none" stroke="#222" stroke-width="0.9"><path d="M4 9.500V1M.8 4L4 .8 7.200 4"/></svg></div>
 <div class="cb" style="left:44.00px;top:191.50px;width:42.25px;height:28px">CE</div>
 <div class="cb" style="left:86.25px;top:191.50px;width:42.25px;height:28px">C</div>
 <div class="cb" style="left:128.50px;top:191.50px;width:42.25px;height:28px"><svg style="left:15.500px;top:10px" width="11" height="8" viewBox="0 0 11 8" fill="none" stroke="#222" stroke-width=".8"><path d="M3.500 .5h7v7h-7L.5 4z"/><path d="M5.300 2.500l3 3M8.300 2.500l-3 3"/></svg></div>
 <div class="cb o" style="left:170.75px;top:191.50px;width:42.25px;height:28px"><svg style="position:static" width="9" height="9" viewBox="0 0 9 9" fill="none" stroke="#3a3a3a" stroke-width="0.85"><path d="M.5 4.500h8"/><circle cx="4.500" cy="1.600" r=".6" fill="#3a3a3a" stroke="none"/><circle cx="4.500" cy="7.400" r=".6" fill="#3a3a3a" stroke="none"/></svg></div>
 <div class="cb" style="left:1.75px;top:219.50px;width:42.25px;height:28px">π</div>
 <div class="cb n" style="left:44.00px;top:219.50px;width:42.25px;height:28px">7</div>
 <div class="cb n" style="left:86.25px;top:219.50px;width:42.25px;height:28px">8</div>
 <div class="cb n" style="left:128.50px;top:219.50px;width:42.25px;height:28px">9</div>
 <div class="cb o" style="left:170.75px;top:219.50px;width:42.25px;height:28px"><svg style="position:static" width="8" height="8" viewBox="0 0 8 8" fill="none" stroke="#3a3a3a" stroke-width="0.85"><path d="M.5 .5l7 7M7.500 .5l-7 7"/></svg></div>
 <div class="cb" style="left:1.75px;top:247.50px;width:42.25px;height:28px">n!</div>
 <div class="cb n" style="left:44.00px;top:247.50px;width:42.25px;height:28px">4</div>
 <div class="cb n" style="left:86.25px;top:247.50px;width:42.25px;height:28px">5</div>
 <div class="cb n" style="left:128.50px;top:247.50px;width:42.25px;height:28px">6</div>
 <div class="cb o" style="left:170.75px;top:247.50px;width:42.25px;height:28px"><svg style="position:static" width="9" height="3" viewBox="0 0 9 3" fill="none" stroke="#3a3a3a" stroke-width="0.85"><path d="M.5 1.500h8"/></svg></div>
 <div class="cb" style="left:1.75px;top:275.50px;width:42.25px;height:28px">±</div>
 <div class="cb n" style="left:44.00px;top:275.50px;width:42.25px;height:28px">1</div>
 <div class="cb n" style="left:86.25px;top:275.50px;width:42.25px;height:28px">2</div>
 <div class="cb n" style="left:128.50px;top:275.50px;width:42.25px;height:28px">3</div>
 <div class="cb o" style="left:170.75px;top:275.50px;width:42.25px;height:28px"><svg style="position:static" width="9" height="9" viewBox="0 0 9 9" fill="none" stroke="#3a3a3a" stroke-width="0.85"><path d="M.5 4.500h8M4.500 .5v8"/></svg></div>
 <div class="cb" style="left:1.75px;top:303.50px;width:42.25px;height:28px">(</div>
 <div class="cb" style="left:44.00px;top:303.50px;width:42.25px;height:28px">)</div>
 <div class="cb n" style="left:86.25px;top:303.50px;width:42.25px;height:28px">0</div>
 <div class="cb" style="left:128.50px;top:303.50px;width:42.25px;height:28px"><span style="font-size:13px;position:relative;top:1px">.</span></div>
 <div class="cb o" style="left:170.75px;top:303.50px;width:42.25px;height:28px"><svg style="position:static" width="9" height="5" viewBox="0 0 9 5" fill="none" stroke="#3a3a3a" stroke-width="0.85"><path d="M.5 1h8M.5 4h8"/></svg></div>
 <div class="a" style="left:43.50px;top:135.5px;width:1px;height:196px;background:#ececec"></div>
 <div class="a" style="left:85.75px;top:135.5px;width:1px;height:196px;background:#ececec"></div>
 <div class="a" style="left:128.00px;top:135.5px;width:1px;height:196px;background:#ececec"></div>
 <div class="a" style="left:170.25px;top:135.5px;width:1px;height:196px;background:#ececec"></div>
 <div class="a" style="left:1.75px;top:135.00px;width:211.25px;height:1px;background:#ececec"></div>
 <div class="a" style="left:1.75px;top:163.00px;width:211.25px;height:1px;background:#ececec"></div>
 <div class="a" style="left:1.75px;top:191.00px;width:211.25px;height:1px;background:#ececec"></div>
 <div class="a" style="left:1.75px;top:219.00px;width:211.25px;height:1px;background:#ececec"></div>
 <div class="a" style="left:1.75px;top:247.00px;width:211.25px;height:1px;background:#ececec"></div>
 <div class="a" style="left:1.75px;top:275.00px;width:211.25px;height:1px;background:#ececec"></div>
 <div class="a" style="left:1.75px;top:303.00px;width:211.25px;height:1px;background:#ececec"></div>
</div>
<!--/CALC-->
</body></html>
